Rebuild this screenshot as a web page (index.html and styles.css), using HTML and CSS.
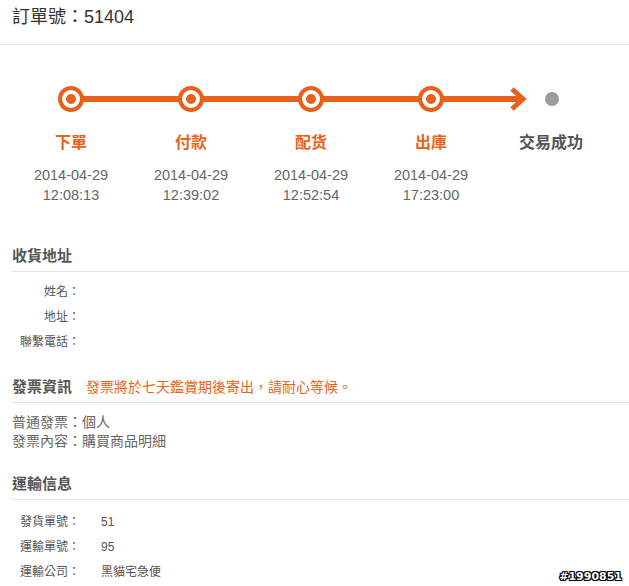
FILE: index.html
```html
<!DOCTYPE html>
<html lang="zh-Hant">
<head>
<meta charset="utf-8">
<title>訂單</title>
<link rel="stylesheet" href="styles.css">
</head>
<body>
<div class="page">
  <div class="header">訂單號：51404</div>

  <svg class="track" width="629" height="40" viewBox="0 0 629 40">
    <line x1="71" y1="20" x2="522" y2="20" stroke="#e8601c" stroke-width="6"/>
    <polyline points="512,10 523,20 512,30" fill="none" stroke="#e8601c" stroke-width="5" stroke-linejoin="miter"/>
    <g fill="#e8601c">
      <circle cx="71" cy="20" r="13"/>
      <circle cx="191" cy="20" r="13"/>
      <circle cx="311" cy="20" r="13"/>
      <circle cx="431" cy="20" r="13"/>
    </g>
    <g fill="#ffffff">
      <circle cx="71" cy="20" r="9"/>
      <circle cx="191" cy="20" r="9"/>
      <circle cx="311" cy="20" r="9"/>
      <circle cx="431" cy="20" r="9"/>
    </g>
    <g fill="#e8601c">
      <circle cx="71" cy="20" r="5"/>
      <circle cx="191" cy="20" r="5"/>
      <circle cx="311" cy="20" r="5"/>
      <circle cx="431" cy="20" r="5"/>
    </g>
    <circle cx="552" cy="20" r="7" fill="#9b9b9b"/>
  </svg>

  <div class="steps">
    <div class="step">
      <div class="step-name">下單</div>
      <div class="step-time">2014-04-29<br>12:08:13</div>
    </div>
    <div class="step">
      <div class="step-name">付款</div>
      <div class="step-time">2014-04-29<br>12:39:02</div>
    </div>
    <div class="step">
      <div class="step-name">配货</div>
      <div class="step-time">2014-04-29<br>12:52:54</div>
    </div>
    <div class="step">
      <div class="step-name">出庫</div>
      <div class="step-time">2014-04-29<br>17:23:00</div>
    </div>
    <div class="step">
      <div class="step-name step-name-pending">交易成功</div>
    </div>
  </div>

  <div class="section section-address">
    <div class="section-title">收貨地址</div>
    <div class="fields fields-address">
      <div class="label">姓名：</div><div class="value"></div>
      <div class="label">地址：</div><div class="value"></div>
      <div class="label">聯繫電話：</div><div class="value"></div>
    </div>
  </div>

  <div class="section section-invoice">
    <div class="section-title">發票資訊<span class="note">發票將於七天鑑賞期後寄出，請耐心等候。</span></div>
    <div class="invoice-lines">
      <div>普通發票：個人</div>
      <div>發票內容：購買商品明細</div>
    </div>
  </div>

  <div class="section section-ship">
    <div class="section-title">運輸信息</div>
    <div class="fields fields-ship">
      <div class="label">發貨單號：</div><div class="value">51</div>
      <div class="label">運輸單號：</div><div class="value">95</div>
      <div class="label">運輸公司：</div><div class="value">黑貓宅急便</div>
    </div>
  </div>

  <div class="watermark">#1990851</div>
</div>
</body>
</html>
```
FILE: styles.css
```css
html, body {
  margin: 0;
  padding: 0;
  background: #ffffff;
}
body {
  font-family: "Liberation Sans", "Noto Sans CJK TC", Arial, sans-serif;
  color: #555;
}
.page {
  position: relative;
  width: 629px;
  height: 586px;
  overflow: hidden;
}
.header {
  box-sizing: border-box;
  height: 45px;
  padding: 0 12px;
  line-height: 34px;
  font-size: 18px;
  color: #333;
  border-bottom: 1px solid #e6e6e6;
}
.track {
  display: block;
  margin-top: 34px;
}
.steps {
  display: flex;
  padding-left: 11px;
  margin-top: 13px;
}
.step {
  width: 120px;
  text-align: center;
}
.step-name {
  font-size: 16px;
  font-weight: bold;
  line-height: 22px;
  color: #e8641b;
}
.step-name-pending {
  color: #555;
}
.step-time {
  margin-top: 11px;
  font-size: 14.5px;
  line-height: 20px;
  color: #666;
}
.section {
  padding-left: 12px;
}
.section-address {
  margin-top: 41px;
}
.section-invoice {
  margin-top: 22px;
}
.section-ship {
  margin-top: 23px;
}
.section-title {
  font-size: 15px;
  font-weight: bold;
  line-height: 20px;
  color: #555;
  padding-bottom: 5px;
  border-bottom: 1px solid #e2e2e2;
}
.note {
  margin-left: 14px;
  font-size: 14px;
  font-weight: normal;
  color: #e8641b;
}
.fields {
  display: grid;
  font-size: 12px;
  line-height: 25px;
  color: #555;
}
.fields-address {
  margin-left: -12px;
  margin-top: 8px;
  grid-template-columns: 80px 1fr;
}
.fields-address .label {
  text-align: right;
}
.fields-ship {
  margin-left: 8px;
  margin-top: 10px;
  grid-template-columns: 60px 1fr;
  column-gap: 21px;
}
.invoice-lines {
  margin-top: 10px;
  font-size: 14px;
  line-height: 19px;
  color: #666;
}
.watermark {
  position: absolute;
  right: 7px;
  bottom: 3px;
  font-family: "DejaVu Sans", sans-serif;
  font-size: 11px;
  font-weight: bold;
  color: #ffffff;
  text-shadow: 1px 0 0 #000, -1px 0 0 #000, 0 1px 0 #000, 0 -1px 0 #000, 1px 1px 0 #000, -1px -1px 0 #000, 1px -1px 0 #000, -1px 1px 0 #000;
}
```
